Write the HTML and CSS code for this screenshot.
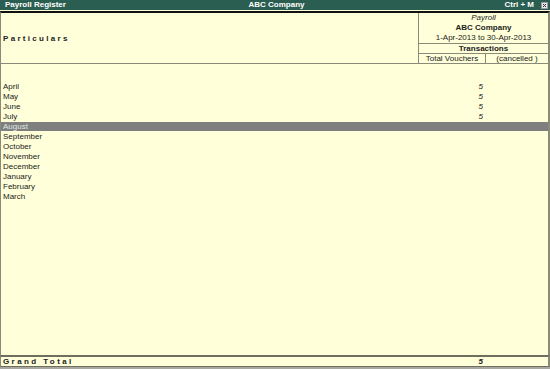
FILE: index.html
```html
<!DOCTYPE html>
<html lang="en">

<head>
  <meta charset="UTF-8">
  <title>Payroll Register</title>
  <link rel="stylesheet" href="styles.css">
</head>

<body>
  <div class="screen">
    <div class="titlebar">
      <span class="title-left">Payroll Register</span>
      <span class="title-center">ABC Company</span>
      <span class="title-right">Ctrl + M <span class="close-box">
          <svg width="7" height="7" viewBox="0 0 7 7">
            <rect x="0.5" y="0.5" width="6" height="6" fill="#e8e8e8" stroke="#9a9a9a" />
            <path d="M2 2 L5 5 M5 2 L2 5" stroke="#333" stroke-width="1" />
          </svg>
        </span></span>
    </div>

    <div class="report-head">
      <div class="head-particulars">Particulars</div>
      <div class="head-period">
        <div class="line italic">Payroll</div>
        <div class="line bold">ABC Company</div>
        <div class="line">1-Apr-2013 to 30-Apr-2013</div>
        <div class="sub bold bordered">Transactions</div>
        <div class="sub sub-cols">
          <span>Total Vouchers</span>
          <span>(cancelled )</span>
        </div>
      </div>
    </div>

    <div class="report-body">
      <div class="row"><span>April</span><span class="val">5</span><span></span></div>
      <div class="row"><span>May</span><span class="val">5</span><span></span></div>
      <div class="row"><span>June</span><span class="val">5</span><span></span></div>
      <div class="row"><span>July</span><span class="val">5</span><span></span></div>
      <div class="row selected"><span>August</span><span class="val"></span><span></span></div>
      <div class="row"><span>September</span><span class="val"></span><span></span></div>
      <div class="row"><span>October</span><span class="val"></span><span></span></div>
      <div class="row"><span>November</span><span class="val"></span><span></span></div>
      <div class="row"><span>December</span><span class="val"></span><span></span></div>
      <div class="row"><span>January</span><span class="val"></span><span></span></div>
      <div class="row"><span>February</span><span class="val"></span><span></span></div>
      <div class="row"><span>March</span><span class="val"></span><span></span></div>
    </div>

    <div class="row grand-total">
      <span class="spaced">Grand Total</span><span class="val">5</span><span></span>
    </div>
  </div>
</body>

</html>
```

FILE: styles.css
```css
body {
  margin: 0;
  background-color: #a8a8a0;
  font-family: 'Liberation Sans', Arial, sans-serif;
  font-size: 8px;
  color: #222;
}

.screen {
  width: 550px;
  height: 367px;
  display: flex;
  flex-direction: column;
  background-color: #ffffd9;
}

.titlebar {
  height: 10px;
  line-height: 10px;
  background-color: #2a5e50;
  color: #fff;
  font-weight: bold;
  display: grid;
  grid-template-columns: 1fr 1fr 1fr;
  padding: 0 2px 0 5px;
}

.title-center {
  text-align: center;
}

.title-right {
  text-align: right;
  display: flex;
  justify-content: flex-end;
  align-items: center;
  gap: 7px;
}

.close-box {
  display: flex;
}

.report-head {
  margin-top: 1px;
  border-top: 2px solid #111;
  border-bottom: 1px solid #8a8a78;
  border-left: 1px solid #8a8a78;
  border-right: 2px solid #8a8a78;
  display: grid;
  grid-template-columns: 1fr 130px;
}

.head-particulars {
  font-weight: bold;
  letter-spacing: 2.3px;
  padding-left: 2px;
  display: flex;
  align-items: center;
}

.head-period {
  border-left: 1px solid #8a8a78;
  text-align: center;
}

.line {
  height: 10px;
  line-height: 10px;
}

.sub {
  height: 9px;
  line-height: 10px;
  border-top: 1px solid #8a8a78;
}

.sub-cols {
  display: grid;
  grid-template-columns: 66px 1fr;
}

.sub-cols span + span {
  border-left: 1px solid #8a8a78;
}

.italic {
  font-style: italic;
}

.bold {
  font-weight: bold;
}

.report-body {
  flex: 1;
  padding-top: 18px;
  border-left: 1px solid #8a8a78;
  border-right: 2px solid #8a8a78;
}

.row {
  display: grid;
  grid-template-columns: 1fr 66px 63px;
  height: 10px;
  line-height: 10px;
  padding-left: 2px;
}

.row .val {
  text-align: right;
  font-style: italic;
  padding-right: 2px;
}

.row.selected {
  background-color: #7f7f7f;
  color: #dfe8e4;
  height: 9px;
  line-height: 9px;
  margin-bottom: 1px;
}

.grand-total {
  border-top: 2px solid #6f6f60;
  border-bottom: 1px solid #6f6f60;
  border-left: 1px solid #8a8a78;
  border-right: 2px solid #8a8a78;
  height: 9px;
  line-height: 10px;
  font-weight: bold;
}

.spaced {
  letter-spacing: 2.4px;
}
```
